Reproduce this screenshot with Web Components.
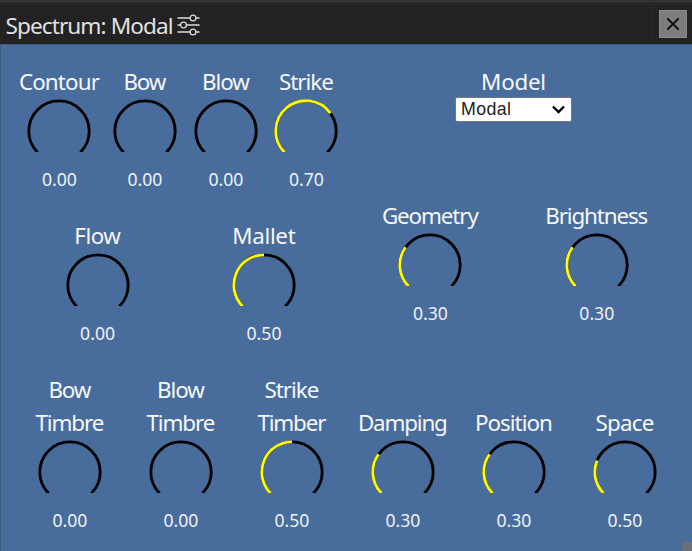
<!DOCTYPE html>
<html lang="en">
<head>
<meta charset="utf-8">
<title>Spectrum: Modal</title>
<style>
html, body { margin: 0; height: 100%; overflow: hidden; }
body { font-family: "Noto Sans", "Open Sans", sans-serif; color: #f6f7f8; background: #222; }
</style>
</head>
<body>
<synth-window></synth-window>
<script>
/* One line of text, tracked so that its ink spans a given width. */
class FitText extends HTMLElement {
  connectedCallback() {
    const root = this.attachShadow({ mode: 'open' });
    root.innerHTML = `<style>
      :host { display: block; white-space: nowrap; }
      span { display: inline-block; }
    </style><span><slot></slot></span>`;
    const span = root.querySelector('span');
    const fit = parseFloat(this.getAttribute('fit'));
    const n = this.textContent.length;
    if (fit) {
      const gap = (fit - span.getBoundingClientRect().width) / (n - 1);
      span.style.letterSpacing = gap + 'px';
      span.style.marginRight = -gap + 'px';
    }
  }
}
customElements.define('fit-text', FitText);

class RotaryKnob extends HTMLElement {
  connectedCallback() {
    const root = this.attachShadow({ mode: 'open' });
    const amount = parseFloat(this.getAttribute('amount') || this.getAttribute('value'));
    const point = t => {
      const a = (135 + 270 * t) * Math.PI / 180;
      return (32 + 30.2 * Math.cos(a)).toFixed(2) + ' ' + (32 + 30.2 * Math.sin(a)).toFixed(2);
    };
    const arc = (from, to) =>
      `M${point(from)}A30.2 30.2 0 ${(to - from) * 270 > 180 ? 1 : 0} 1 ${point(to)}`;
    root.innerHTML = `<style>
      :host { display: flex; flex-direction: column; align-items: center; }
      .label { font-size: 22.4px; line-height: 33px; margin-bottom: 1px; text-align: center; display: flex; flex-direction: column; align-items: center; }
      svg { display: block; width: 64px; height: 53px; }
      path { fill: none; stroke-width: 2.8; }
      .value { font-size: 17.6px; line-height: 24px; margin-top: 15px; color: #f0f2f4; }
    </style>
    <div class="label"><slot></slot></div>
    <svg viewBox="0 0 64 53">
      <path d="${arc(0, 1)}" stroke="#000"/>
      ${amount > 0 ? `<path d="${arc(0, amount)}" stroke="#ff0"/>` : ''}
    </svg>
    <fit-text class="value" fit="35">${this.getAttribute('value')}</fit-text>`;
  }
}
customElements.define('rotary-knob', RotaryKnob);

class TitleBar extends HTMLElement {
  connectedCallback() {
    this.attachShadow({ mode: 'open' }).innerHTML = `<style>
      :host { display: flex; align-items: center; height: 44px; box-sizing: border-box;
        padding: 4px 5px 0 5.5px; background: linear-gradient(#303030 0 3px, #1e1e1e 3px 4px, #2c2c2c 4px 5px, #222 5px); color: #e0e0e0; }
      .title { font-size: 22.6px; line-height: 34px; margin-top: 4px; }
      .tune { width: 24px; height: 22px; margin: 2px 0 0 4px; }
      .edge { width: 1px; height: 38px; background: #292929; margin: 0 6px 0 auto; }
      button { width: 28px; height: 28px; padding: 0; border: 1px solid #8c8c8c; background: #7d7d7d; display: grid; place-items: center; margin-top: -1px; }
    </style>
    <fit-text class="title" fit="168">Spectrum: Modal</fit-text>
    <svg class="tune" viewBox="0 0 24 22" fill="none" stroke="#ddd" stroke-width="1.3">
      <path d="M0.5 4H13M19 4H22.5M0.5 11H3.5M9.5 11H22.5M0.5 18H13M19 18H22.5"/>
      <circle cx="16" cy="4" r="2.9"/><circle cx="6.5" cy="11" r="2.9"/><circle cx="16" cy="18" r="2.9"/>
    </svg>
    <span class="edge"></span>
    <button aria-label="Close"><svg width="14" height="14" viewBox="0 0 14 14" stroke="#080808" stroke-width="1.9"><path d="M1.3 1.3L12.7 12.7M12.7 1.3L1.3 12.7"/></svg></button>`;
  }
}
customElements.define('title-bar', TitleBar);

class ModelSelect extends HTMLElement {
  connectedCallback() {
    this.attachShadow({ mode: 'open' }).innerHTML = `<style>
      :host { display: flex; flex-direction: column; align-items: center; }
      .name { font-size: 22.4px; line-height: 33px; }
      .box { display: flex; align-items: center; justify-content: space-between; box-sizing: border-box;
        width: 117px; height: 25px; margin-top: -1px; padding: 0 6px 0 5px; background: #fff;
        border: 1px solid #777; border-radius: 2px; color: #222;
        font: 17.8px/22px "Liberation Sans", sans-serif; }
      .box svg { width: 13px; height: 9px; }
      .box fit-text { margin-top: -1px; }
    </style>
    <fit-text class="name" fit="65">Model</fit-text>
    <div class="box"><fit-text fit="50">Modal</fit-text>
      <svg viewBox="0 0 13 9" fill="none" stroke="#000" stroke-width="2.4"><path d="M1 1.5L6.5 7L12 1.5"/></svg></div>`;
  }
}
customElements.define('model-select', ModelSelect);

class SynthWindow extends HTMLElement {
  connectedCallback() {
    this.attachShadow({ mode: 'open' }).innerHTML = `<style>
      :host { display: flex; flex-direction: column; height: 551px; width: 692px; position: relative; overflow: hidden; }
      main { flex: 1; box-sizing: border-box; background: #486c9b; border-left: 1px solid #3d597e; border-top: 1px solid #40597a; padding: 20px 0 0 13.4px; }
      .top { display: grid; grid-template-columns: 332.8px 332.8px; height: 308px; }
      .row { display: grid; }
      .exciters { grid-template-columns: 90px 81px 81px 80px; height: 154px; }
      .pair { grid-template-columns: 1fr 1fr; }
      .right { display: flex; flex-direction: column; }
      .right model-select { height: 134px; }
      .timbres { grid-template-columns: repeat(6, 111px); align-items: end; height: 159px; }
      .grip { position: absolute; right: 0; bottom: 0; width: 10px; height: 9px; background: #6c7079; }
    </style>
    <title-bar></title-bar>
    <main>
      <div class="top">
        <div>
          <div class="row exciters">
            <rotary-knob value="0.00"><fit-text fit="81">Contour</fit-text></rotary-knob>
            <rotary-knob value="0.00"><fit-text fit="43">Bow</fit-text></rotary-knob>
            <rotary-knob value="0.00"><fit-text fit="48">Blow</fit-text></rotary-knob>
            <rotary-knob value="0.70"><fit-text fit="55">Strike</fit-text></rotary-knob>
          </div>
          <div class="row pair">
            <rotary-knob value="0.00"><fit-text fit="46.5">Flow</fit-text></rotary-knob>
            <rotary-knob value="0.50"><fit-text fit="63.5">Mallet</fit-text></rotary-knob>
          </div>
        </div>
        <div class="right">
          <model-select></model-select>
          <div class="row pair">
            <rotary-knob value="0.30"><fit-text fit="97">Geometry</fit-text></rotary-knob>
            <rotary-knob value="0.30"><fit-text fit="103">Brightness</fit-text></rotary-knob>
          </div>
        </div>
      </div>
      <div class="row timbres">
        <rotary-knob value="0.00"><fit-text fit="43">Bow</fit-text><fit-text fit="69">Timbre</fit-text></rotary-knob>
        <rotary-knob value="0.00"><fit-text fit="48">Blow</fit-text><fit-text fit="69">Timbre</fit-text></rotary-knob>
        <rotary-knob value="0.50"><fit-text fit="55">Strike</fit-text><fit-text fit="69">Timber</fit-text></rotary-knob>
        <rotary-knob value="0.30"><fit-text fit="90">Damping</fit-text></rotary-knob>
        <rotary-knob value="0.30"><fit-text fit="78">Position</fit-text></rotary-knob>
        <rotary-knob value="0.50" amount="0.25"><fit-text fit="59">Space</fit-text></rotary-knob>
      </div>
    </main>
    <span class="grip"></span>`;
  }
}
customElements.define('synth-window', SynthWindow);
</script>
</body>
</html>
